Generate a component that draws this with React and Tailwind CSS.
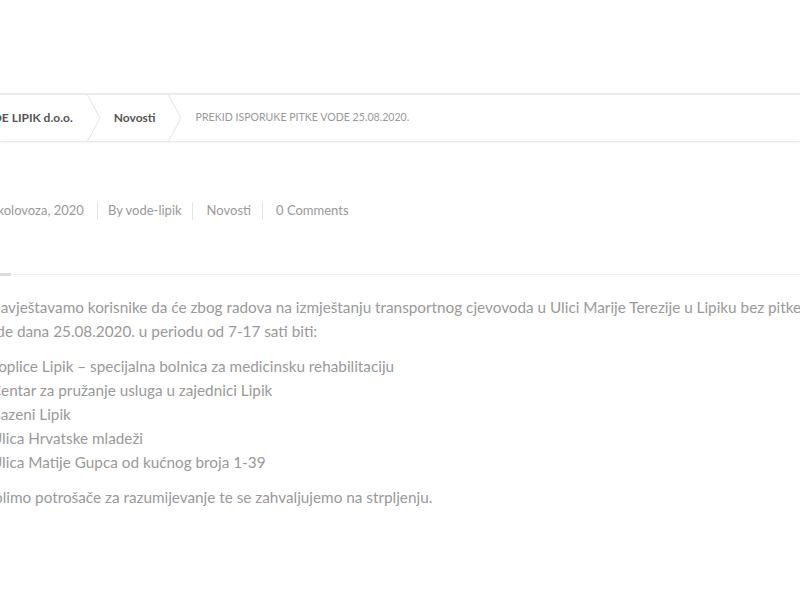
import React from 'react';

const font = { fontFamily: 'Lato, "Noto Sans", sans-serif' };

function Chevron() {
    return (
        <svg width="14" height="46" viewBox="0 0 14 46" className="shrink-0">
            <polyline points="0.5,0 13,23 0.5,46" fill="none" stroke="#e3e3e3" strokeWidth="1" />
        </svg>
    );
}

export default function App() {
    const items = [
        'Toplice Lipik – specijalna bolnica za medicinsku rehabilitaciju',
        'Centar za pružanje usluga u zajednici Lipik',
        'Bazeni Lipik',
        'Ulica Hrvatske mladeži',
        'Ulica Matije Gupca od kućnog broja 1-39',
    ];

    return (
        <div className="w-[800px] h-[600px] overflow-hidden bg-white" style={font}>
            <div className="h-[93px]" />

            {/* breadcrumb */}
            <div className="h-[48px] border-t-2 border-[#ececec] shadow-[0_1px_2px_rgba(0,0,0,0.12)] flex items-center bg-white">
                <div className="flex items-center -ml-[25px] h-full">
                    <span className="text-[12px] font-bold text-[#555] pr-[14px]">VODE LIPIK d.o.o.</span>
                    <Chevron />
                    <span className="text-[12px] font-bold text-[#555] pl-[13px] pr-[12px]">Novosti</span>
                    <Chevron />
                    <span className="text-[10.6px] text-[#999] pl-[14px]">PREKID ISPORUKE PITKE VODE 25.08.2020.</span>
                </div>
            </div>

            {/* meta */}
            <div className="mt-[60px] flex items-center text-[13px] text-[#999] -ml-[24px]">
                <span className="pr-[13px]">25. kolovoza, 2020</span>
                <span className="h-[18px] border-l border-[#e5e5e5]" />
                <span className="pl-[10px] pr-[10px]">By vode-lipik</span>
                <span className="h-[18px] border-l border-[#e5e5e5]" />
                <span className="pl-[14px] pr-[11px]">Novosti</span>
                <span className="h-[18px] border-l border-[#e5e5e5]" />
                <span className="pl-[13px]">0 Comments</span>
            </div>

            <div className="mt-[53px] relative h-px bg-[#ececec]">
                <div className="absolute left-0 -top-[1px] w-[11px] h-[3px] bg-[#dcdcdc]" />
            </div>

            {/* content */}
            <div className="-ml-[20px] mt-[20px] text-[15.3px] leading-[24px] text-[#999] w-[900px]">
                <p>Obavještavamo korisnike da će zbog radova na izmještanju transportnog cjevovoda u Ulici Marije Terezije u Lipiku bez pitke<br />vode dana 25.08.2020. u periodu od 7-17 sati biti:</p>
                <ul className="mt-[11px] pl-[11px]">
                    {items.map((item) => (
                        <li key={item}>{item}</li>
                    ))}
                </ul>
                <p className="mt-[11px]">Molimo potrošače za razumijevanje te se zahvaljujemo na strpljenju.</p>
            </div>
        </div>
    );
}
